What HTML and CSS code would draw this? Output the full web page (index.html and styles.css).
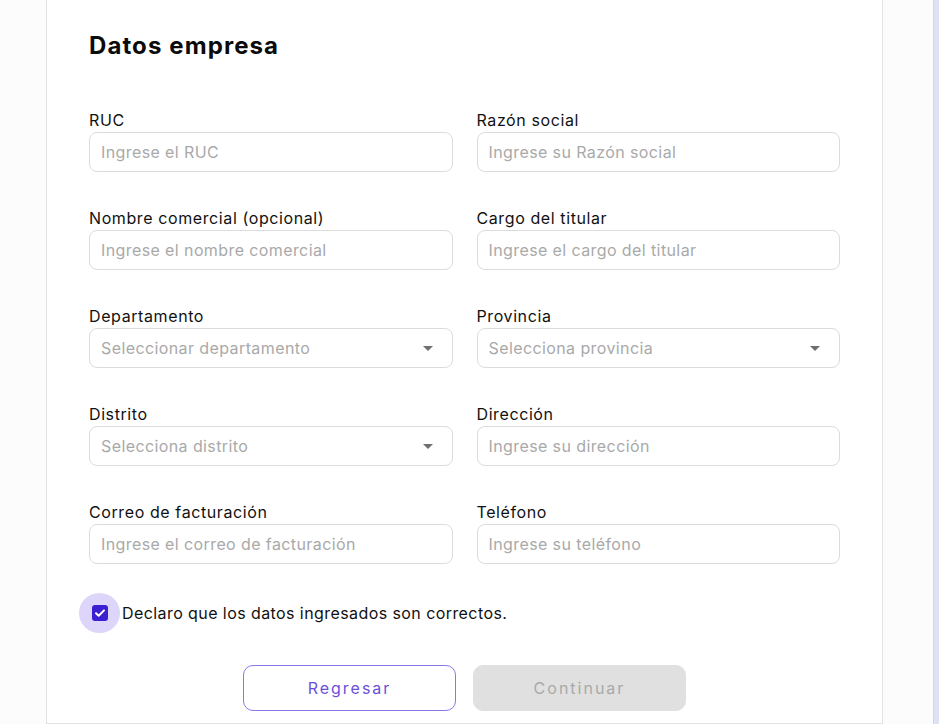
FILE: index.html
```html
<!DOCTYPE html>
<html lang="es">
<head>
    <meta charset="UTF-8">
    <title>Datos empresa</title>
    <link rel="stylesheet" href="styles.css">
</head>
<body>
    <div class="page">
        <div class="main">
            <div class="card">
                <h2 class="title">Datos empresa</h2>

                <div class="grid">
                    <div class="field">
                        <label class="label">RUC</label>
                        <div class="input"><span class="ph">Ingrese el RUC</span></div>
                    </div>
                    <div class="field">
                        <label class="label">Razón social</label>
                        <div class="input"><span class="ph">Ingrese su Razón social</span></div>
                    </div>

                    <div class="field">
                        <label class="label">Nombre comercial (opcional)</label>
                        <div class="input"><span class="ph">Ingrese el nombre comercial</span></div>
                    </div>
                    <div class="field">
                        <label class="label">Cargo del titular</label>
                        <div class="input"><span class="ph">Ingrese el cargo del titular</span></div>
                    </div>

                    <div class="field">
                        <label class="label">Departamento</label>
                        <div class="input select"><span class="ph">Seleccionar departamento</span><span class="caret"></span></div>
                    </div>
                    <div class="field">
                        <label class="label">Provincia</label>
                        <div class="input select"><span class="ph">Selecciona provincia</span><span class="caret"></span></div>
                    </div>

                    <div class="field">
                        <label class="label">Distrito</label>
                        <div class="input select"><span class="ph">Selecciona distrito</span><span class="caret"></span></div>
                    </div>
                    <div class="field">
                        <label class="label">Dirección</label>
                        <div class="input"><span class="ph">Ingrese su dirección</span></div>
                    </div>

                    <div class="field">
                        <label class="label">Correo de facturación</label>
                        <div class="input"><span class="ph">Ingrese el correo de facturación</span></div>
                    </div>
                    <div class="field">
                        <label class="label">Teléfono</label>
                        <div class="input"><span class="ph">Ingrese su teléfono</span></div>
                    </div>
                </div>

                <div class="check-row">
                    <span class="halo">
                        <svg class="box" viewBox="0 0 18 18" width="18" height="18">
                            <rect x="1" y="1" width="16" height="16" rx="3" fill="#3b1fd3"/>
                            <path d="M5 9.2l2.7 2.6L13 6.4" fill="none" stroke="#fff" stroke-width="2" stroke-linecap="round" stroke-linejoin="round"/>
                        </svg>
                    </span>
                    <span class="check-text">Declaro que los datos ingresados son correctos.</span>
                </div>

                <div class="actions">
                    <button class="btn btn-outline">Regresar</button>
                    <button class="btn btn-disabled">Continuar</button>
                </div>
            </div>
        </div>
        <div class="scroll-strip"></div>
    </div>
</body>
</html>
```

FILE: styles.css
```css
*{
    box-sizing: border-box;
}
body{
    margin: 0;
    background-color: #fff;
    font-family: Inter, "Open Sans", sans-serif;
    color: #111;
}
.page{
    display: flex;
    height: 724px;
    overflow: hidden;
}
.main{
    flex: 1;
    padding-left: 46px;
    padding-right: 50px;
    background-color: #fcfcfc;
}
.scroll-strip{
    width: 6px;
    background-color: #dfe1f4;
    border-left: 1px solid #d3d5ec;
}
.card{
    background-color: #fff;
    border: 1px solid #e3e3e3;
    border-top: none;
    height: 100%;
    padding: 31px 42px 0 42px;
}
.title{
    margin: 0;
    font-size: 24px;
    line-height: 30px;
    font-weight: 700;
    letter-spacing: 1.1px;
    color: #0b0b0b;
}
.grid{
    margin-top: 49px;
    display: grid;
    grid-template-columns: 1fr 1fr;
    column-gap: 24px;
    row-gap: 36px;
}
.field{
    display: flex;
    flex-direction: column;
}
.label{
    font-size: 16px;
    line-height: 20px;
    margin-bottom: 2px;
    letter-spacing: 0.6px;
    color: #111;
}
.input{
    height: 40px;
    border: 1px solid #dcdcdc;
    border-radius: 8px;
    padding: 0 11px;
    display: flex;
    align-items: center;
    justify-content: space-between;
}
.ph{
    font-size: 16px;
    color: #a9a9a9;
    letter-spacing: 0.4px;
}
.caret{
    width: 0;
    height: 0;
    border-left: 5px solid transparent;
    border-right: 5px solid transparent;
    border-top: 5px solid #6f6f6f;
    margin-right: 8px;
}
.check-row{
    margin-top: 29px;
    margin-left: -10px;
    display: flex;
    align-items: center;
}
.halo{
    width: 41px;
    height: 40px;
    border-radius: 50%;
    background-color: #ddd6fa;
    display: flex;
    align-items: center;
    justify-content: center;
}
.check-text{
    margin-left: 2px;
    font-size: 16px;
    letter-spacing: 0.42px;
    color: #111;
}
.actions{
    margin-top: 32px;
    display: flex;
    justify-content: center;
    gap: 17px;
}
.btn{
    width: 213px;
    height: 46px;
    border-radius: 10px;
    font-family: Inter, "Open Sans", sans-serif;
    font-size: 16px;
    letter-spacing: 2px;
}
.btn-outline{
    background-color: #fff;
    border: 1px solid #8a78e4;
    color: #6a4fdc;
}
.btn-disabled{
    background-color: #e0e0e0;
    border: 1px solid #e0e0e0;
    color: #a9a9a9;
}
```
